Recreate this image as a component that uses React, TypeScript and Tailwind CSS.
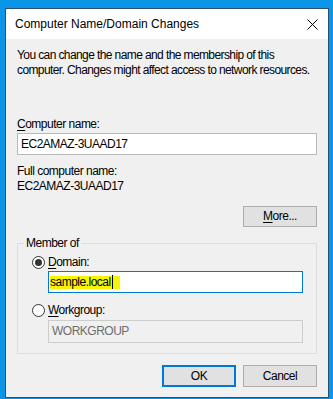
export default function App() {
  return (
    <div className="w-[333px] h-[399px] bg-[#0a95e6] pt-[8px] pl-[5px] font-['Liberation_Sans',Arial,sans-serif] text-[12px] leading-[15px] text-black">
      {/* WINDOW */}
      <div className="w-[324px] h-[390px] border border-[#2b4f73] bg-[#f0f0f0] flex flex-col">
        {/* TITLE BAR */}
        <div className="h-[30px] bg-white flex items-center justify-between pl-[9px] pr-[10px] shrink-0">
          <span className="text-[12px]">Computer Name/Domain Changes</span>
          <svg width="11" height="11" viewBox="0 0 11 11" className="mt-[1px]">
            <path d="M0.5 0.5 L10.5 10.5 M10.5 0.5 L0.5 10.5" stroke="#000" strokeWidth="1" />
          </svg>
        </div>
        {/* BODY */}
        <div className="flex flex-col pl-[11px] pr-[11px] tracking-[-0.5px]">
          <p className="mt-[9px] tracking-[-0.6px] whitespace-nowrap">
            You can change the name and the membership of this
            <br />
            computer. Changes might affect access to network resources.
          </p>
          <label className="mt-[39px]">
            <span className="underline underline-offset-2">C</span>omputer name:
          </label>
          <div className="mt-[1px] h-[22px] border border-[#b9b9b9] bg-white flex items-center px-[3px]">
            EC2AMAZ-3UAAD17
          </div>
          <p className="mt-[9px]">Full computer name:</p>
          <p>EC2AMAZ-3UAAD17</p>
          <button className="self-end mt-[12px] w-[74px] h-[21px] border border-[#adadad] bg-[#e1e1e1] text-center">
            <span className="underline underline-offset-2">M</span>ore...
          </button>
          {/* MEMBER OF GROUP */}
          <div className="mt-[16px] h-[111px] border border-[#dcdcdc] flex flex-col pl-[14px] pr-[13px]">
            <span className="-mt-[8px] ml-[-8px] self-start bg-[#f0f0f0] px-[2px]">Member of</span>
            <div className="mt-[4px] flex items-center gap-[3px]">
              <span className="w-[13px] h-[13px] rounded-full border border-[#333] bg-white flex items-center justify-center">
                <span className="w-[7px] h-[7px] rounded-full bg-[#333]" />
              </span>
              <span>
                <span className="underline underline-offset-2">D</span>omain:
              </span>
            </div>
            <div className="mt-[1px] ml-[16px] h-[22px] border border-[#0078d7] bg-white flex items-center px-[1px]">
              <span className="bg-[#f5f500] flex items-center h-[13px] pr-[7px]">
                sample.local
                <span className="w-[1px] h-[14px] bg-black ml-[1px]" />
              </span>
            </div>
            <div className="mt-[10px] flex items-center gap-[3px]">
              <span className="w-[13px] h-[13px] rounded-full border border-[#333] bg-white" />
              <span>
                <span className="underline underline-offset-2">W</span>orkgroup:
              </span>
            </div>
            <div className="mt-[2px] ml-[16px] h-[23px] border border-[#cccccc] bg-[#f0f0f0] flex items-center px-[3px] text-[#6d6d6d]">
              WORKGROUP
            </div>
          </div>
          {/* BUTTONS */}
          <div className="mt-[11px] flex justify-end gap-[7px]">
            <button className="w-[74px] h-[22px] border-2 border-[#0078d7] bg-[#e1e1e1] text-center">OK</button>
            <button className="w-[74px] h-[22px] border border-[#adadad] bg-[#e1e1e1] text-center">Cancel</button>
          </div>
        </div>
      </div>
    </div>
  );
}
